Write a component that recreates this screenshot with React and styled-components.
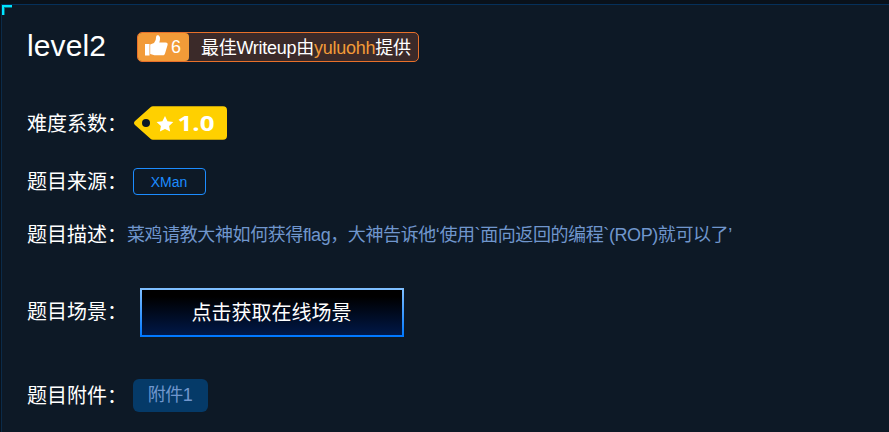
import React from "react";
import styled, { createGlobalStyle } from "styled-components";

const GlobalStyle = createGlobalStyle`
  * { box-sizing: border-box; }
  body {
    margin: 0;
    background: #09111a;
    font-family: "Liberation Sans", "Noto Sans CJK SC", sans-serif;
    overflow: hidden;
  }
`;

const Page = styled.main`
  height: 432px;
  padding: 4px 0 0 1px;
`;

const Panel = styled.section`
  position: relative;
  height: 428px;
  padding-left: 25px;
  border-top: 1px solid #05305a;
  border-left: 1px solid #0b2b49;
  background: #0d1926;
`;

const Corner = styled.span`
  position: absolute;
  top: 0;
  left: 0;
  width: 10px;
  height: 10px;
  border-top: 2px solid #00e4ff;
  border-left: 2px solid #00e4ff;
  box-shadow: inset 1px 1px 0 #087080;
`;

const Header = styled.header`
  display: flex;
  align-items: center;
  height: 84px;
`;

const Title = styled.h1`
  width: 110px;
  margin: 0 0 3px;
  color: #fff;
  font-size: 30px;
  font-weight: 400;
  line-height: 34px;
  letter-spacing: 0.1px;
`;

const Writeup = styled.div`
  display: flex;
  width: 282px;
  height: 30px;
  border: 1px solid #e8702a;
  border-radius: 5px;
  background: #3b2a29;
  color: #fff;
  font-size: 18px;
  line-height: 30px;
  white-space: nowrap;
`;

const Likes = styled.span`
  display: flex;
  align-items: center;
  gap: 3px;
  width: 51px;
  padding-left: 7px;
  border-radius: 4px;
  background: #f29b38;
  line-height: 28px;

  svg { margin-bottom: 3px; }
`;

const WriteupText = styled.span`
  margin-left: 12px;
  letter-spacing: -0.27px;
`;

const Author = styled.span`
  color: #f29b38;
`;

const Row = styled.div`
  display: flex;
  align-items: center;
  height: ${({ $height }) => $height}px;
`;

const Label = styled.span`
  width: ${({ $width = 106 }) => $width}px;
  flex: none;
  padding-top: 1px;
  color: #fff;
  font-size: 20px;
  line-height: 28px;
  white-space: nowrap;
`;

const Tag = styled.span`
  width: 73px;
  height: 27px;
  border: 1px solid #1c8cff;
  border-radius: 4px;
  color: #1c8cff;
  font-size: 14px;
  line-height: 26px;
  text-align: center;
  text-indent: -1px;
`;

const Description = styled.span`
  color: #7096cd;
  font-size: 18px;
  line-height: 26px;
  letter-spacing: -0.41px;
  white-space: nowrap;
`;

const SceneButton = styled.button`
  width: 264px;
  height: 49px;
  margin: 2px 0 0 7px;
  padding: 0 1px 0 0;
  border: 2px solid;
  border-image: linear-gradient(#7fbfff, #0078ff) 1;
  background: linear-gradient(#000 15%, #001848);
  color: #fff;
  font: inherit;
  font-size: 20px;
  line-height: 44px;
`;

const Attachment = styled.a`
  width: 75px;
  height: 33px;
  border-radius: 6px;
  background: #053a68;
  color: #7096cd;
  font-size: 18px;
  letter-spacing: -0.5px;
  line-height: 32px;
  text-align: center;
  text-indent: -1px;
`;

function ThumbIcon() {
  return (
    <svg width="23" height="21" viewBox="0 0 23 21" fill="#fff">
      <path d="M0 9h4.5v11.5H0zM5.2 9.5 9 8q2.2-2.5 2.2-6.5C11.5.2 13 0 14 .8c1.7 1.4 1.1 4 .3 6.7h6.2c2 0 2.5 1.3 2 2.8l-2.5 8.2c-.4 1.3-1.2 1.8-2.3 1.8H9.5L5.2 19z" />
    </svg>
  );
}

function DifficultyBadge() {
  return (
    <svg width="94" height="34" viewBox="0 0 94 34">
      <path fill="#ffd000" d="M1 15 16.5 1.2Q17.5.3 19 .3h70q4 0 4 4v25.4q0 4-4 4H19q-1.5 0-2.5-1L1 19q-2-2 0-4z" />
      <circle cx="12" cy="17" r="4" fill="#0d1926" />
      <path fill="#fff" d="m31 10 2.5 5.2 5.8.8-4.2 4 1 5.6-5.1-2.7-5.1 2.7 1-5.6-4.3-4 5.8-.8z" />
      <text x="43.5" y="25" fill="#fff" fontFamily="Open Sans" fontSize="22" fontWeight="700" textLength="37" lengthAdjust="spacingAndGlyphs">1.0</text>
    </svg>
  );
}

export default function App() {
  return (
    <Page lang="zh-CN">
      <GlobalStyle />
      <Panel>
        <Corner />
        <Header>
          <Title>level2</Title>
          <Writeup>
            <Likes><ThumbIcon />6</Likes>
            <WriteupText>最佳Writeup由<Author>yuluohh</Author>提供</WriteupText>
          </Writeup>
        </Header>
        <Row $height={68}>
          <Label $width={107}>难度系数：</Label>
          <DifficultyBadge />
        </Row>
        <Row $height={49}>
          <Label>题目来源：</Label>
          <Tag>XMan</Tag>
        </Row>
        <Row $height={57}>
          <Label $width={100}>题目描述：</Label>
          <Description>菜鸡请教大神如何获得flag，大神告诉他‘使用`面向返回的编程`(ROP)就可以了’</Description>
        </Row>
        <Row $height={97}>
          <Label>题目场景：</Label>
          <SceneButton>点击获取在线场景</SceneButton>
        </Row>
        <Row $height={71}>
          <Label>题目附件：</Label>
          <Attachment>附件1</Attachment>
        </Row>
      </Panel>
    </Page>
  );
}
